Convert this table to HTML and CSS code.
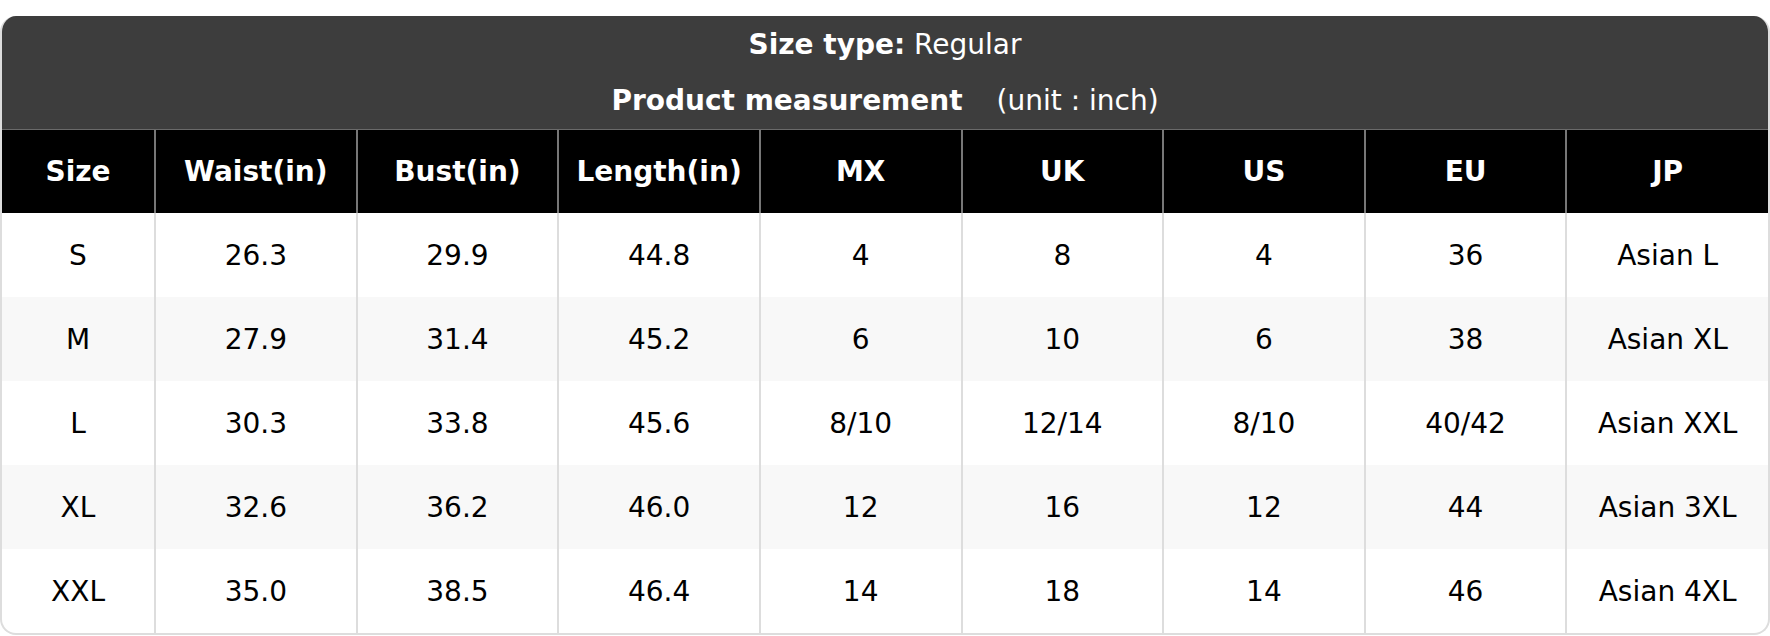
FILE: index.html
```html
<!DOCTYPE html>
<html>
<head>
<meta charset="utf-8">
<link rel="stylesheet" href="styles.css">
</head>
<body>
<div class="chart">
  <div class="title">
    <div class="title-line"><b>Size type:</b> Regular</div>
    <div class="title-line"><b>Product measurement</b><span class="unit">(unit : inch)</span></div>
  </div>
  <table class="sizes">
    <colgroup>
      <col class="col-first">
      <col><col><col><col><col><col><col><col>
    </colgroup>
    <thead>
      <tr><th>Size</th><th>Waist(in)</th><th>Bust(in)</th><th>Length(in)</th><th>MX</th><th>UK</th><th>US</th><th>EU</th><th>JP</th></tr>
    </thead>
    <tbody>
      <tr><td>S</td><td>26.3</td><td>29.9</td><td>44.8</td><td>4</td><td>8</td><td>4</td><td>36</td><td>Asian L</td></tr>
      <tr><td>M</td><td>27.9</td><td>31.4</td><td>45.2</td><td>6</td><td>10</td><td>6</td><td>38</td><td>Asian XL</td></tr>
      <tr><td>L</td><td>30.3</td><td>33.8</td><td>45.6</td><td>8/10</td><td>12/14</td><td>8/10</td><td>40/42</td><td>Asian XXL</td></tr>
      <tr><td>XL</td><td>32.6</td><td>36.2</td><td>46.0</td><td>12</td><td>16</td><td>12</td><td>44</td><td>Asian 3XL</td></tr>
      <tr><td>XXL</td><td>35.0</td><td>38.5</td><td>46.4</td><td>14</td><td>18</td><td>14</td><td>46</td><td>Asian 4XL</td></tr>
    </tbody>
  </table>
</div>
</body>
</html>
```

FILE: styles.css
```css
html, body {
  margin: 0;
  padding: 0;
  background: #ffffff;
}
body {
  padding-top: 16px;
  font-family: "DejaVu Sans", "Liberation Sans", sans-serif;
}
.chart {
  width: 1770px;
  box-sizing: border-box;
  border: 2px solid #dddddd;
  border-top: 0;
  border-radius: 16px;
  overflow: hidden;
}
.title {
  background: #3d3d3d;
  color: #ffffff;
  font-size: 28px;
  text-align: center;
  border-bottom: 1px solid #6a6a6a;
}
.title-line {
  height: 56px;
  line-height: 56px;
}
.title-line:first-child {
  height: 57px;
  line-height: 57px;
}
.unit {
  margin-left: 34px;
}
.sizes {
  width: 100%;
  border-collapse: collapse;
  table-layout: fixed;
  font-size: 28px;
}
.col-first {
  width: 153px;
}
.sizes th {
  background: #000000;
  color: #ffffff;
  font-weight: bold;
  height: 83px;
  padding: 0;
  border-left: 2px solid #777777;
  border-right: 2px solid #777777;
}
.sizes td {
  height: 84px;
  padding: 0;
  text-align: center;
  color: #000000;
  border-left: 2px solid #dddddd;
  border-right: 2px solid #dddddd;
}
.sizes th:first-child, .sizes td:first-child {
  border-left: 0;
}
.sizes th:last-child, .sizes td:last-child {
  border-right: 0;
}
.sizes tbody tr:nth-child(even) td {
  background: #f8f8f8;
}
```
